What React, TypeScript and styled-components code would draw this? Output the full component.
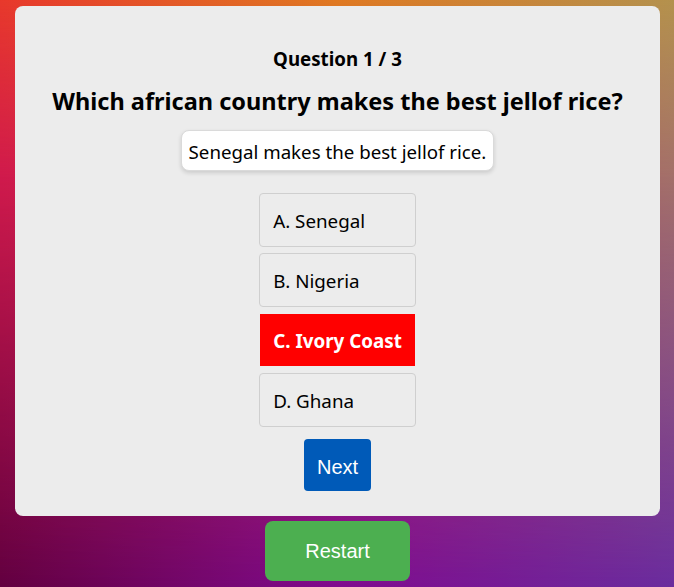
import React from "react";
import styled, { createGlobalStyle } from "styled-components";

const GlobalStyle = createGlobalStyle`
  html, body { margin: 0; padding: 0; }
  body {
    font-family: "Noto Sans", "Open Sans", sans-serif;
    color: #000;
  }
  * { box-sizing: border-box; }
`;

const Page = styled.div`
  position: relative;
  min-height: 100vh;
  padding: 6px 14px 0 15px;
  display: flex;
  flex-direction: column;
  align-items: center;
  background: linear-gradient(to right, #e8392c 0%, #e07a22 50%, #b4924e 100%);
  overflow: hidden;

  &::before,
  &::after {
    content: "";
    position: absolute;
    inset: 0;
    pointer-events: none;
  }
  &::before {
    background: linear-gradient(to right, #d01a4c 0%, #c63a52 50%, #a3706a 100%);
    -webkit-mask-image: linear-gradient(to bottom, transparent 0%, #000 30%);
    mask-image: linear-gradient(to bottom, transparent 0%, #000 30%);
  }
  &::after {
    background: linear-gradient(to right, #620040 0%, #7f0a8e 50%, #6a2c9e 100%);
    -webkit-mask-image: linear-gradient(to bottom, transparent 30%, #000 100%);
    mask-image: linear-gradient(to bottom, transparent 30%, #000 100%);
  }
`;

const Card = styled.main`
  position: relative;
  z-index: 1;
  width: 100%;
  background: #ececec;
  border-radius: 8px;
  padding: 41px 20px 25px;
  display: flex;
  flex-direction: column;
  align-items: center;
  text-align: center;
`;

const Counter = styled.h3`
  margin: 0;
  font-size: 18.72px;
  line-height: 24px;
  font-weight: 700;
`;

const Question = styled.h2`
  margin: 15px 0 0;
  font-size: 23.5px;
  line-height: 30px;
  font-weight: 700;
  white-space: nowrap;
`;

const Explanation = styled.p`
  margin: 14px 0 0;
  padding: 9px 7px 7px;
  font-size: 18.7px;
  line-height: 23px;
  background: #ffffff;
  border: 1px solid #dadada;
  border-radius: 8px;
  box-shadow: 0 2px 4px rgba(0, 0, 0, 0.14);
  white-space: nowrap;
`;

const Options = styled.div`
  margin-top: 22px;
  display: flex;
  flex-direction: column;
  align-items: stretch;
  gap: 6px;
`;

const Option = styled.button<{ $selected?: boolean }>`
  display: block;
  text-align: left;
  font-family: inherit;
  font-size: 18.8px;
  line-height: 24px;
  padding: 15px 13px 13px;
  border: 1px solid ${(p) => (p.$selected ? "#ececec" : "#cfcfcf")};
  border-radius: ${(p) => (p.$selected ? "0" : "4px")};
  background: ${(p) => (p.$selected ? "#ff0000" : "#ececec")};
  color: ${(p) => (p.$selected ? "#ffffff" : "#000000")};
  font-weight: ${(p) => (p.$selected ? 700 : 400)};
  white-space: nowrap;
  cursor: pointer;
`;

const NextButton = styled.button`
  margin-top: 12px;
  font-family: "Liberation Sans", Arial, sans-serif;
  font-size: 20px;
  line-height: 24px;
  padding: 16px 13px 12px;
  background: #005ab8;
  color: #ffffff;
  border: none;
  border-radius: 4px;
  cursor: pointer;
`;

const RestartButton = styled.button`
  position: relative;
  z-index: 1;
  margin-top: 5px;
  font-family: "Liberation Sans", Arial, sans-serif;
  font-size: 20px;
  line-height: 24px;
  padding: 18px 40px;
  background: #4caf50;
  color: #ffffff;
  border: none;
  border-radius: 8px;
  cursor: pointer;
`;

const options = [
  { key: "A", label: "Senegal" },
  { key: "B", label: "Nigeria" },
  { key: "C", label: "Ivory Coast" },
  { key: "D", label: "Ghana" },
];

export default function App() {
  const selected = "C";
  return (
    <>
      <GlobalStyle />
      <Page>
        <Card>
          <Counter>Question 1 / 3</Counter>
          <Question>Which african country makes the best jellof rice?</Question>
          <Explanation>Senegal makes the best jellof rice.</Explanation>
          <Options>
            {options.map((o) => (
              <Option key={o.key} $selected={o.key === selected}>
                {o.key}. {o.label}
              </Option>
            ))}
          </Options>
          <NextButton>Next</NextButton>
        </Card>
        <RestartButton>Restart</RestartButton>
      </Page>
    </>
  );
}
